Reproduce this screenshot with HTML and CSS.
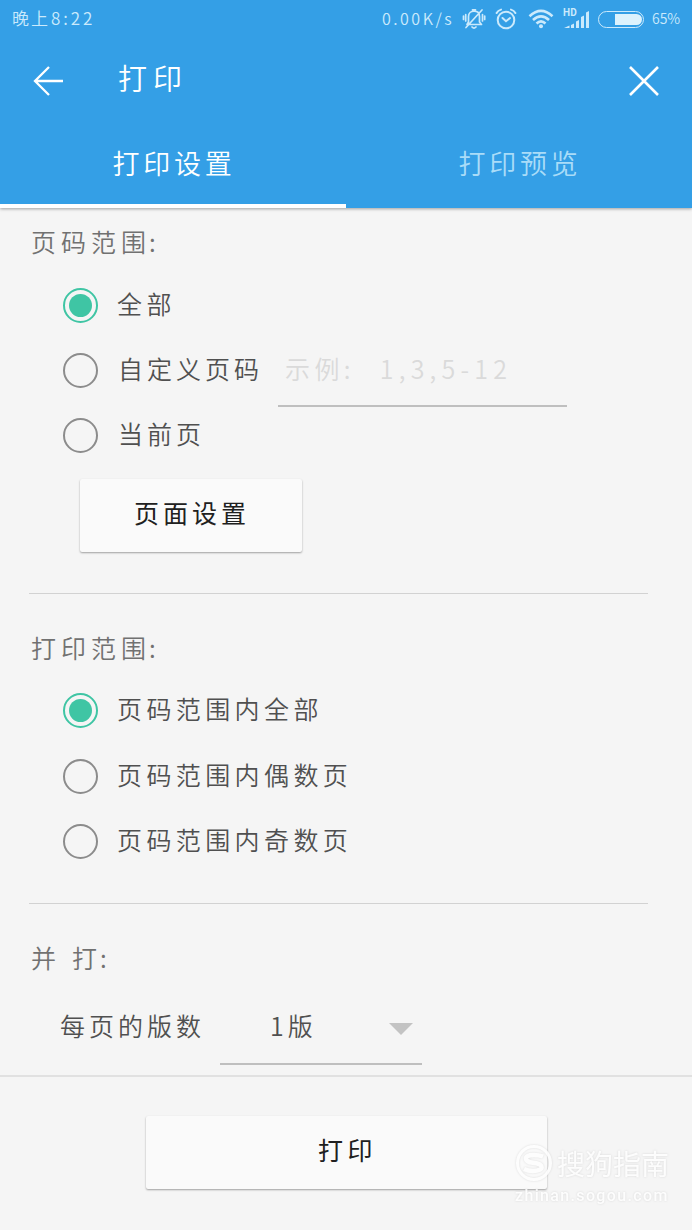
FILE: index.html
```html
<!DOCTYPE html>
<html lang="zh-CN">
<head>
<meta charset="utf-8">
<title>打印</title>
<link rel="stylesheet" href="styles.css">
</head>
<body>
<div class="screen">
  <header class="header">
    <div class="status">
      <div class="clock"><span class="clock-cn">晚上</span><span class="clock-num">8:22</span></div>
      <div class="status-right">
        <span class="speed">0.00K/s</span>
        <svg class="i-bell" width="24" height="22" viewBox="0 0 24 22" fill="none" stroke="currentColor" stroke-width="1.7" stroke-linecap="round" stroke-linejoin="round"><path d="M6 16.5H19.5L17.500 14V8.500C17.500 5 15 3.200 12 3.200S6.500 5 6.500 8.500V14L5 16.500M4 19.500L20 2M3.700 6.500V13M1.500 8V11.500M20.500 6.500V13M22.700 8V11.500M10.500 1.800H13.500"/><path d="M10 19Q12 21 14 19"/></svg>
        <svg class="i-alarm" width="22" height="22" viewBox="0 0 22 22" fill="none" stroke="currentColor" stroke-width="2" stroke-linecap="round"><circle cx="11" cy="12" r="8.300"/><path d="M7.500 10L11 13.200L15 10M1.600 5Q3 2.400 6 1.600M20.400 5Q19 2.400 16 1.600"/></svg>
        <svg class="i-wifi" width="26" height="20" viewBox="0 0 26 20" fill="none" stroke="currentColor" stroke-width="2.600"><path d="M1.500 7.200Q13 -3.500 24.500 7.200M5 11Q13 3.600 21 11M8.500 14.500Q13 10.300 17.500 14.500"/><circle cx="13" cy="17.300" r="2" fill="currentColor" stroke="none"/></svg>
        <div class="signal"><span class="hd">HD</span><svg width="27" height="20" viewBox="0 0 27 20" fill="currentColor"><path d="M1 19L6.500 16.500V19ZM8 16L11 14.500V19H8ZM13 12.500L16 11V19H13ZM18 8L21 6.500V19H18ZM23 3.500L26 2V19H23Z"/></svg></div>
        <div class="battery"><div class="battery-level"></div></div>
        <span class="percent">65%</span>
      </div>
    </div>
    <div class="toolbar">
      <svg class="back" width="32" height="32" viewBox="0 0 32 32" fill="none" stroke="#fff" stroke-width="2.300"><path d="M31 16H3M17 2L3 16L17 30"/></svg>
      <h1 class="title">打印</h1>
      <svg class="close" width="32" height="32" viewBox="0 0 32 32" fill="none" stroke="#fff" stroke-width="2.600"><path d="M2 2L30 30M30 2L2 30"/></svg>
    </div>
    <nav class="tabs">
      <div class="tab active">打印设置</div>
      <div class="tab">打印预览</div>
    </nav>
  </header>
  <main class="content">
    <section class="section pages">
      <h2 class="label">页码范围<span class="colon">:</span></h2>
      <div class="option"><i class="radio checked"></i><span class="text short">全部</span></div>
      <div class="option"><i class="radio"></i><span class="text custom">自定义页码</span><div class="field"><span>示例</span><span class="sample-colon">:</span><span class="sample">1,3,5-12</span></div></div>
      <div class="option"><i class="radio"></i><span class="text custom">当前页</span></div>
      <div class="button setup">页面设置</div>
    </section>
    <section class="section range">
      <h2 class="label">打印范围<span class="colon">:</span></h2>
      <div class="option"><i class="radio checked"></i><span class="text">页码范围内全部</span></div>
      <div class="option"><i class="radio"></i><span class="text">页码范围内偶数页</span></div>
      <div class="option"><i class="radio"></i><span class="text">页码范围内奇数页</span></div>
    </section>
    <section class="nup">
      <h2 class="label nup-label"><span>并</span><span>打</span><span class="colon">:</span></h2>
      <div class="nup-row"><span class="nup-text">每页的版数</span><div class="select"><span><span class="one">1</span>版</span><i class="caret"></i></div></div>
    </section>
  </main>
  <footer class="footer">
    <div class="button print">打印</div>
    <div class="watermark">
      <div class="brand"><svg width="38" height="38" viewBox="0 0 38 38" fill="none" stroke="currentColor"><circle cx="19" cy="19" r="16.500" stroke-width="3"/><path d="M28 12.500Q24 11 18.500 11C8 11 9 18 18 18.700C29 19.500 30 27 18 27Q13 27 9 25" stroke-width="4.500"/></svg><span>搜狗指南</span></div>
      <div class="url">zhinan.sogou.com</div>
    </div>
  </footer>
</div>
</body>
</html>
```
FILE: styles.css
```css
* { box-sizing: border-box; }
body { margin: 0; background: #f5f5f5; font-family: "Noto Sans CJK SC", sans-serif; font-weight: 350; }
h1, h2 { margin: 0; font-weight: 350; }
svg { display: block; flex: none; }
.screen { width: 692px; height: 1230px; display: flex; flex-direction: column; overflow: hidden; color: #505050; font-size: 25px; letter-spacing: 4.400px; white-space: nowrap; }

.header { height: 208px; flex: none; background: #349fe6; color: #fff; box-shadow: 0 1px 3px rgba(0,0,0,.35); display: flex; flex-direction: column; z-index: 1; }
.status { height: 38px; display: flex; justify-content: space-between; align-items: center; padding: 0 13px 0 12px; color: #cbeafc; line-height: 36px; }
.clock { display: flex; font-size: 17px; letter-spacing: 2px; height: 38px; }
.clock-num { letter-spacing: 2.900px; margin-left: 1px; }
.status-right { display: flex; align-items: center; height: 38px; font-size: 16px; }
.speed { width: 70px; letter-spacing: 2.500px; height: 38px; margin-right: 10px; }
.i-bell { margin-right: 9px; }
.i-alarm { margin-right: 11px; }
.i-wifi { margin-right: 9px; }
.signal { width: 27px; height: 20px; position: relative; margin-right: 8px; }
.hd { position: absolute; left: 0; top: -1px; font: bold 10px/10px Roboto, sans-serif; letter-spacing: .2px; }
.battery { width: 46px; height: 17px; border: 1.500px solid #cbeafc; border-radius: 9px; padding: 2px 1px; display: flex; justify-content: flex-end; margin-right: 8px; }
.battery-level { width: 27px; background: #dcf2fd; border-radius: 0 7px 7px 0; }
.percent { width: 27px; height: 38px; font-size: 14px; letter-spacing: 0; }

.toolbar { height: 85px; display: flex; align-items: center; padding: 0 32px; }
.title { font-size: 29px; letter-spacing: 6px; line-height: 40px; margin: -7px auto 0 54px; }
.tabs { display: flex; flex: 1; }
.tab { flex: 1; text-align: center; font-size: 27px; letter-spacing: 3.700px; line-height: 79px; padding-left: 2px; color: #a9dcf8; border-bottom: 4px solid transparent; }
.tab.active { color: #fff; border-bottom-color: #fff; }

.content { flex: 1; padding: 0 44px 0 29px; }
.label { font-size: 25px; line-height: 38px; height: 40px; letter-spacing: 5px; color: #717171; padding-left: 2px; display: flex; }
.colon { margin-left: -2px; }
.section { border-bottom: 1px solid #d2d2d2; }
.pages { height: 386px; padding-top: 14px; }
.pages .label { margin-bottom: 10.500px; }
.option { height: 65.400px; display: flex; align-items: center; padding-left: 34px; }
.radio { width: 35px; height: 35px; border: 2px solid #8c8c8c; border-radius: 50%; flex: none; display: flex; align-items: center; justify-content: center; }
.radio.checked { border-color: #3fc5a4; }
.radio.checked::after { content: ""; width: 23px; height: 23px; border-radius: 50%; background: #3fc5a4; }
.text { margin: -5px 0 0 19px; line-height: 40px; }
.custom { margin-left: 20px; letter-spacing: 4px; }
.field { width: 289px; height: 56px; margin: 17px 0 0 15px; border-bottom: 2px solid #bfbfbf; padding: 0 0 0 7px; line-height: 35px; color: #dadada; display: flex; }
.sample-colon { width: 36px; margin-left: 0; }
.sample { letter-spacing: 5.200px; }
.button { background: #fafafa; border-radius: 2px; box-shadow: 0 1px 2px rgba(0,0,0,.35); color: #202020; height: 73px; line-height: 67px; text-align: center; font-weight: 400; }
.setup { width: 222px; margin: 10px 0 0 51px; padding-left: 2px; letter-spacing: 4px; }
.range { height: 310px; padding-top: 34px; }
.range .label { margin-bottom: 10px; }
.nup { padding-top: 34px; }
.nup-label span:nth-child(2) { margin-left: 11px; }
.nup-row { display: flex; height: 67px; margin-top: 17px; padding-left: 31px; line-height: 60px; }
.nup-text { letter-spacing: 4px; }
.select { width: 202px; height: 70px; margin-left: 15px; border-bottom: 2px solid #bfbfbf; padding: 0 9px 0 50px; display: flex; justify-content: space-between; }
.one { letter-spacing: 4px; }
.caret { width: 0; height: 0; border: 12px solid transparent; border-top-color: #c3c3c3; border-bottom: 0; margin-top: 28px; }

.footer { height: 155px; flex: none; border-top: 2px solid #e1e1e1; padding: 39px 0 0 146px; position: relative; }
.print { width: 401px; padding-left: 2px; }
.watermark { position: absolute; left: 515px; top: 67px; color: rgba(255,255,255,.9); filter: drop-shadow(0 0 1px rgba(0,0,0,.13)); }
.brand { display: flex; align-items: center; gap: 4px; font-size: 28px; letter-spacing: 0; line-height: 36px; height: 38px; font-weight: 400; }
.url { font: 500 16px/24px Roboto, sans-serif; letter-spacing: 1.350px; margin-top: 2px; }
```
